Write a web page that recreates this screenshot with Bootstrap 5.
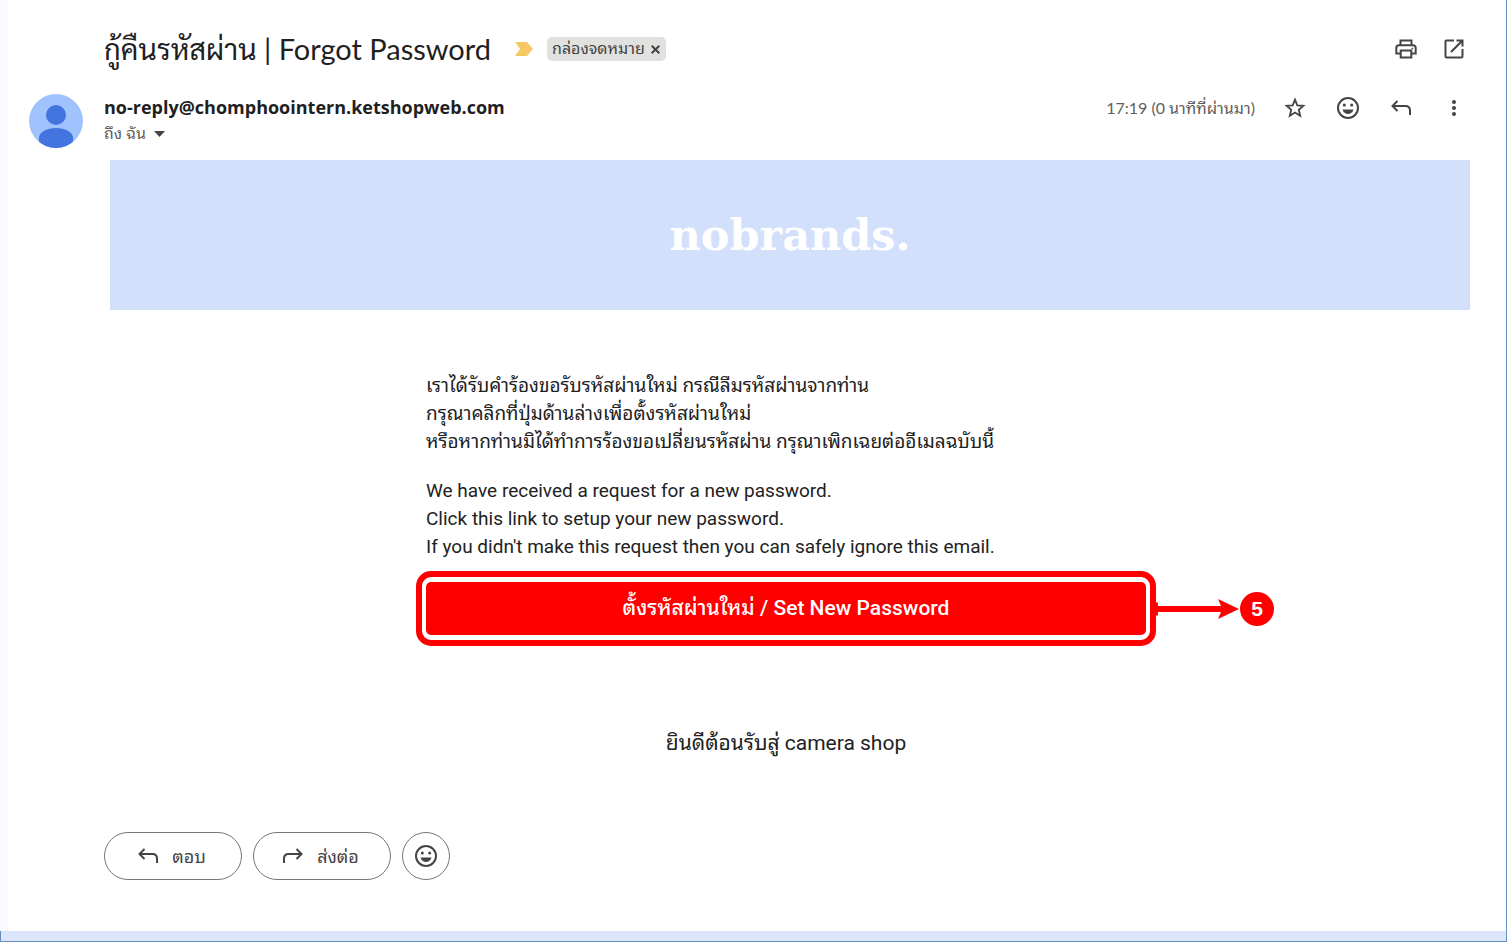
<!DOCTYPE html>
<html lang="th">
<head>
<meta charset="utf-8">
<meta name="viewport" content="width=device-width, initial-scale=1">
<title>กู้คืนรหัสผ่าน | Forgot Password</title>
<link href="https://cdn.jsdelivr.net/npm/bootstrap@5.3.0/dist/css/bootstrap.min.css" rel="stylesheet">
<style>
  body { font-family: Roboto, "Noto Sans Thai Looped", Sarabun, sans-serif; color: #222; background: #fff; }
  svg { display: block; }
  .mail-app { border-right: 1px solid #6a90c4; border-bottom: 1px solid #6b8cb8; }
  .mail-pane { border-left: 8px solid #f8faff; padding: 24px 36px 0 0; }
  .bottom-band { height: 10px; background: #dbe6fa; border-left: 1px solid #6b8cb8; }
  .gutter { padding-left: 96px; }
  .subject-row { min-height: 50px; }
  .subject { font-family: Lato, Sarabun, "Noto Sans Thai Looped", sans-serif; font-size: 29px; line-height: 40px; font-weight: 400; color: #1f1f1f; }
  .importance { margin: 0 12px 0 24px; }
  .label-chip { background: #e1e1e0; border-radius: 5px; height: 24px; padding: 0 6px 0 5px; gap: 6px; font-size: 16px; color: #444; }
  .tool { color: #444; background: none; border: 0; padding: 0; width: 24px; height: 24px; }
  .message-head { padding-top: 18px; }
  .avatar-col { width: 96px; padding: 2px 0 0 21px; }
  .sender { font-family: "Open Sans", sans-serif; font-size: 18px; line-height: 30px; font-weight: 700; color: #1f1f1f; }
  .to-line { font-size: 16px; line-height: 24px; color: #5e5e5e; background: none; border: 0; padding: 0; }
  .time-stamp { font-family: Lato, "Noto Sans Thai Looped", sans-serif; font-size: 16px; color: #5e5e5e; margin-right: 28px; }
  .tool-row { gap: 29px; }
  .email-body { margin: 12px 0 0 102px; }
  .banner { height: 150px; background: #d3e0fc; color: #fff; font-family: "DejaVu Serif", serif; font-weight: 700; font-size: 43px; line-height: 150px; }
  .email-text { max-width: 720px; font-size: 19px; line-height: 28px; padding-top: 62px; }
  .email-text p { margin-bottom: 21px; }
  .reset-btn { height: 53px; background: #f00; color: #fff; border-radius: 5px; font-size: 21px; font-weight: 500; line-height: 53px; }
  .reset-btn:hover { color: #fff; }
  .callout-frame { position: absolute; inset: -11px -10px; border: 6px solid #f00; border-radius: 15px; pointer-events: none; }
  .callout-arrow { position: absolute; left: 100%; top: 50%; transform: translate(7px, -50%); }
  .callout-num { position: absolute; left: 100%; top: 50%; transform: translate(94px, -50%); width: 34px; height: 34px; border-radius: 50%; background: #f00; color: #fff; font: 700 21px/34px "Liberation Sans", sans-serif; }
  .welcome { font-size: 21px; line-height: 32px; padding: 92px 0 73px; }
  .action-row { gap: 11px; }
  .action { border: 1px solid #747775; border-radius: 24px; height: 48px; background: #fff; color: #444; font-size: 18px; }
  .action-wide { width: 138px; gap: 12px; padding: 0 4px 0 0; }
  .action-round { width: 48px; }
</style>
</head>
<body>
<svg width="0" height="0" class="position-absolute" aria-hidden="true">
  <symbol id="i-reply" viewBox="0 0 24 24"><path fill="none" stroke="currentColor" stroke-width="2" d="M8.500 5 3.500 10 8.500 15M3.500 10H16.500Q21 10 21 14.500V19"/></symbol>
  <symbol id="i-smile" viewBox="0 0 24 24"><circle cx="12" cy="12" r="10" fill="none" stroke="currentColor" stroke-width="2"/><circle cx="8.300" cy="9" r="1.500" fill="currentColor"/><circle cx="15.700" cy="9" r="1.500" fill="currentColor"/><path fill="currentColor" d="M6.500 13.500h11C16.700 16.300 14.600 18 12 18s-4.700-1.700-5.500-4.500z"/></symbol>
</svg>
<div class="mail-app min-vh-100 d-flex flex-column">
  <main class="mail-pane flex-grow-1">
    <header class="subject-row gutter d-flex align-items-center">
      <h1 class="subject mb-0">กู้คืนรหัสผ่าน | Forgot Password</h1>
      <svg class="importance flex-shrink-0" width="20" height="14" viewBox="0 0 20 14"><path fill="#f7c763" d="M0 0H12L18 7 12 14H0L5 7z"/></svg>
      <span class="label-chip d-flex align-items-center">กล่องจดหมาย
        <button class="tool w-auto h-auto" type="button" aria-label="ลบป้ายกำกับ"><svg width="9" height="9" viewBox="0 0 9 9"><path stroke="currentColor" stroke-width="2" d="M.7.7 8.300 8.300M8.300.7.7 8.300"/></svg></button>
      </span>
      <div class="ms-auto d-flex gap-4 pe-1">
        <button class="tool" type="button" aria-label="พิมพ์"><svg width="24" height="24" viewBox="0 0 24 24" fill="none" stroke="currentColor" stroke-width="2"><path d="M6.500 8V3.500h11V8M6.500 16.500H2.300V11Q2.300 8.300 5 8.300H19Q21.700 8.300 21.700 11V16.500H17.500M6.700 13.500H17.300V20.500H6.700z"/><circle cx="18.300" cy="11.500" r=".5" stroke-width="1"/></svg></button>
        <button class="tool" type="button" aria-label="เปิดในหน้าต่างใหม่"><svg width="24" height="24" viewBox="0 0 24 24" fill="none" stroke="currentColor" stroke-width="2"><path d="M12 3.500H4.500Q3.500 3.500 3.500 4.500V19.500Q3.500 20.500 4.500 20.500H19.500Q20.500 20.500 20.500 19.500V12M14.500 3.500H20.500V9.500M20.500 3.500 9 15"/></svg></button>
      </div>
    </header>

    <section class="message-head d-flex align-items-start">
      <div class="avatar-col flex-shrink-0">
        <svg width="54" height="54" viewBox="0 0 54 54"><defs><clipPath id="av"><circle cx="27" cy="27" r="27"/></clipPath></defs><g clip-path="url(#av)"><path fill="#a0c3fd" d="M0 0h54v54H0z"/><circle cx="27" cy="21" r="10" fill="#4374e0"/><path fill="#4374e0" d="M10 54V44C10 38 18 34 27 34s17 4 17 10v10z"/></g></svg>
      </div>
      <div>
        <div class="sender">no-reply@chomphoointern.ketshopweb.com</div>
        <button class="to-line d-flex align-items-center gap-2" type="button">ถึง ฉัน <svg width="11" height="6" viewBox="0 0 11 6"><path fill="#444" d="M0 0h11L5.500 6z"/></svg></button>
      </div>
      <div class="ms-auto d-flex align-items-center pt-1 pe-1">
        <span class="time-stamp lh-1">17:19 (0 นาทีที่ผ่านมา)</span>
        <div class="tool-row d-flex">
          <button class="tool" type="button" aria-label="ติดดาว"><svg width="24" height="24" viewBox="0 0 24 24"><path fill="none" stroke="currentColor" stroke-width="1.800" d="M12 3.600 14.300 9.300 20.400 9.800 15.800 13.800 17.200 19.800 12 16.600 6.800 19.800 8.200 13.800 3.600 9.800 9.700 9.300z"/></svg></button>
          <button class="tool" type="button" aria-label="แสดงความรู้สึก"><svg width="24" height="24"><use href="#i-smile"/></svg></button>
          <button class="tool" type="button" aria-label="ตอบ"><svg width="24" height="24"><use href="#i-reply"/></svg></button>
          <button class="tool" type="button" aria-label="เพิ่มเติม"><svg width="24" height="24" viewBox="0 0 24 24" fill="currentColor"><circle cx="12" cy="6" r="2"/><circle cx="12" cy="12" r="2"/><circle cx="12" cy="18" r="2"/></svg></button>
        </div>
      </div>
    </section>

    <article class="email-body">
      <div class="banner text-center">nobrands.</div>
      <div class="pe-2">
        <div class="email-text mx-auto">
          <p>เราได้รับคำร้องขอรับรหัสผ่านใหม่ กรณีลืมรหัสผ่านจากท่าน<br>กรุณาคลิกที่ปุ่มด้านล่างเพื่อตั้งรหัสผ่านใหม่<br>หรือหากท่านมิได้ทำการร้องขอเปลี่ยนรหัสผ่าน กรุณาเพิกเฉยต่ออีเมลฉบับนี้</p>
          <p>We have received a request for a new password.<br>Click this link to setup your new password.<br>If you didn't make this request then you can safely ignore this email.</p>
          <div class="position-relative">
            <a href="#" class="reset-btn d-block text-center text-decoration-none">ตั้งรหัสผ่านใหม่ / Set New Password</a>
            <div class="callout-frame"></div>
            <svg class="callout-arrow" width="87" height="22" viewBox="0 0 87 22"><path fill="#f00" d="M0 4.500H5V8H68L65 1 86 11 65 21 68 14H5V17.500H0z"/></svg>
            <span class="callout-num text-center">5</span>
          </div>
        </div>
        <div class="welcome text-center">ยินดีต้อนรับสู่ camera shop</div>
      </div>
    </article>

    <footer class="action-row gutter d-flex pb-5">
      <button class="action action-wide d-flex align-items-center justify-content-center" type="button"><svg width="24" height="24"><use href="#i-reply"/></svg>ตอบ</button>
      <button class="action action-wide d-flex align-items-center justify-content-center" type="button"><svg width="24" height="24" viewBox="0 0 24 24"><g transform="matrix(-1 0 0 1 24 0)"><use href="#i-reply"/></g></svg>ส่งต่อ</button>
      <button class="action action-round d-flex align-items-center justify-content-center p-0" type="button" aria-label="แสดงความรู้สึก"><svg width="24" height="24"><use href="#i-smile"/></svg></button>
    </footer>
  </main>
  <div class="bottom-band"></div>
</div>
<script src="https://cdn.jsdelivr.net/npm/bootstrap@5.3.0/dist/js/bootstrap.bundle.min.js"></script>
</body>
</html>
